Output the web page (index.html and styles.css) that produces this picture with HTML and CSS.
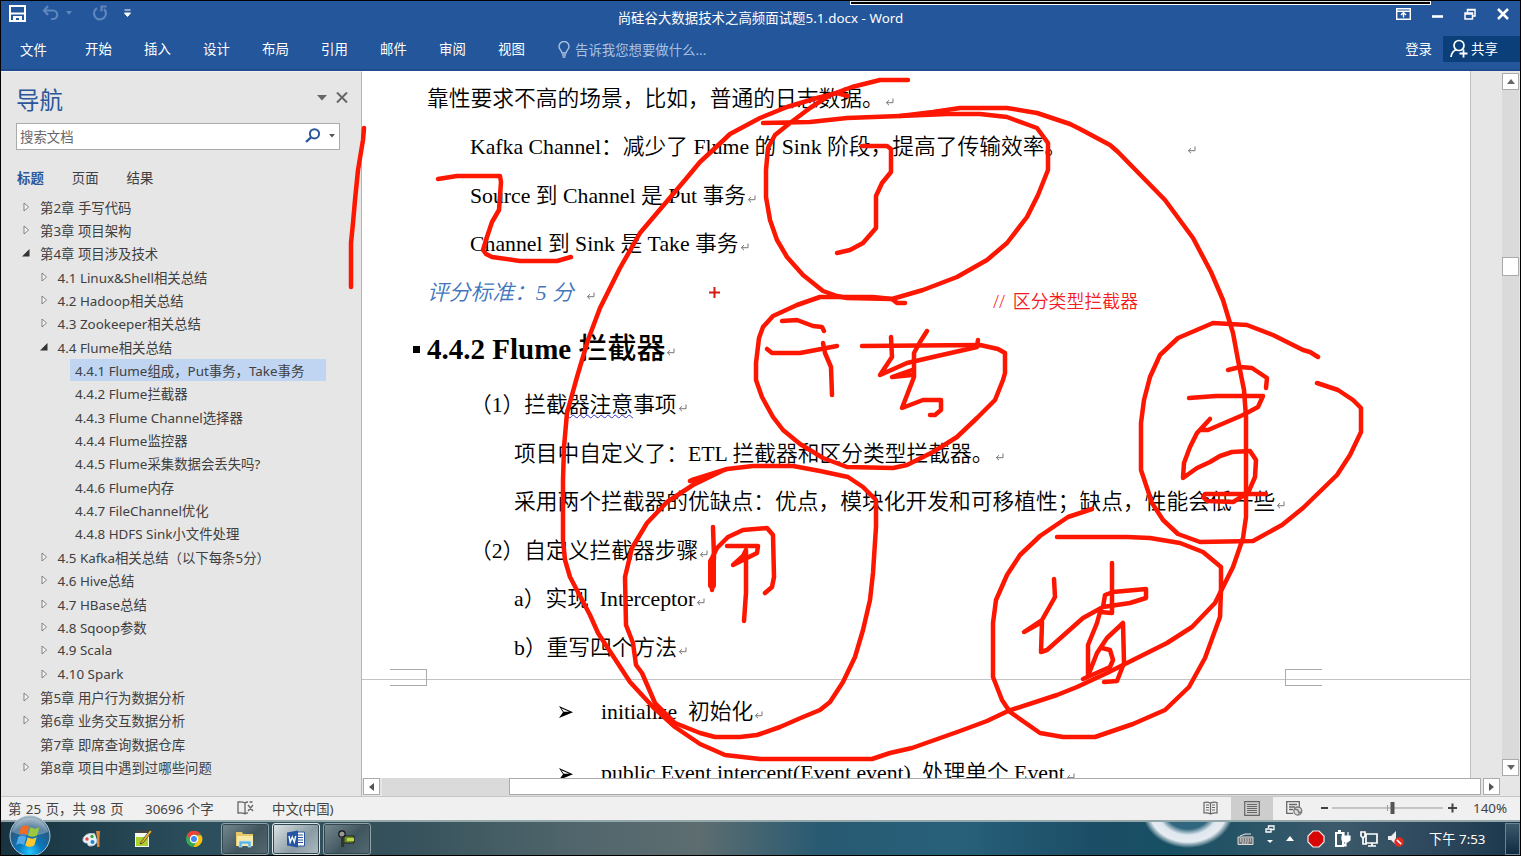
FILE: index.html
```html
<!DOCTYPE html>
<html lang="zh-CN">
<head>
<meta charset="utf-8">
<title>尚硅谷大数据技术之高频面试题5.1.docx - Word</title>
<link rel="stylesheet" href="styles.css">
</head>
<body>
<svg class="defs" width="0" height="0">
  <symbol id="ret" viewBox="0 0 9 9"><path d="M8 .5v4.2H1.6M4 2.2 1.4 4.7 4 7.2" fill="none" stroke="#777" stroke-width="1"/></symbol>
  <symbol id="shut" viewBox="0 0 7 10"><path d="M1 1v8l4.6-4z" fill="#f4f4f4" stroke="#777" stroke-width=".9"/></symbol>
  <symbol id="open" viewBox="0 0 8 8"><path d="M7.5 0v7.5H0z" fill="#333"/></symbol>
  <symbol id="bullet" viewBox="0 0 16 14"><path d="M1 1l14 6.2L1 13l4-5.800z" fill="#000"/><path d="M3.300 3.200l8 3.600H5.800z" fill="#fff"/></symbol>
</svg>
<div class="screen">
  <header class="head">
    <div class="titlebar">
      <div class="quick">
        <svg class="save" width="17" height="17" viewBox="0 0 17 17"><path d="M1 1h15v15H1z" fill="none" stroke="#fff" stroke-width="2"/><path d="M2 8.500h13" stroke="#fff" stroke-width="2" fill="none"/><path d="M4 11h9v5h-3v-3H7v3H4z" fill="#fff"/></svg>
        <svg class="undo" width="18" height="16" viewBox="0 0 18 16"><path d="M6 1 2 5.500 6 10M2.500 5.500h8.500a4 4 0 0 1 0 8.500H9" fill="none" stroke="#5f86bc" stroke-width="2.200"/></svg>
        <svg class="caret" width="6" height="4" viewBox="0 0 6 4"><path d="M0 0h6L3 4z" fill="#5f86bc"/></svg>
        <svg class="redo" width="16" height="16" viewBox="0 0 16 16"><path d="M5 3.200a6 6 0 1 0 7 .8M9.500 6.500V1.500h5" fill="none" stroke="#5f86bc" stroke-width="2.200"/></svg>
        <svg class="more" width="7" height="8" viewBox="0 0 7 8"><path d="M.5 1h6M.5 4h6L3.500 7.500z" fill="#fff" stroke="#fff" stroke-width="1"/></svg>
      </div>
      <div class="doctitle">尚硅谷大数据技术之高频面试题5.1.docx - Word</div>
      <div class="winbtns">
        <svg width="15" height="12" viewBox="0 0 15 12"><path d="M.7.7h13.600v10.600H.7zM1 3.200h13" fill="none" stroke="#fff" stroke-width="1.400"/><path d="M7.500 9.500V5.500M5 7l2.500-2.500L10 7" fill="none" stroke="#fff" stroke-width="1.400"/></svg>
        <svg width="11" height="12" viewBox="0 0 11 12"><path d="M0 8.500h11" stroke="#fff" stroke-width="2.600"/></svg>
        <svg width="12" height="12" viewBox="0 0 12 12"><path d="M1 5h7.500v6H1zM1 6h7M3.500 5V1.500H11V8H8.500M3.500 2H11" fill="none" stroke="#fff" stroke-width="1.500"/></svg>
        <svg width="12" height="12" viewBox="0 0 12 12"><path d="M1 1l10 10M11 1 1 11" stroke="#fff" stroke-width="2.500"/></svg>
      </div>
    </div>
    <nav class="tabs">
      <span class="tab">文件</span><span class="tab">开始</span><span class="tab">插入</span><span class="tab">设计</span><span class="tab">布局</span><span class="tab">引用</span><span class="tab">邮件</span><span class="tab">审阅</span><span class="tab">视图</span>
      <svg class="bulb" width="12" height="17" viewBox="0 0 12 17"><path d="M4 12C4 9.500 1 8.500 1 5.500a5 5 0 0 1 10 0C11 8.500 8 9.500 8 12zM4 14h4M4.500 16h3" fill="none" stroke="#a9c0e0" stroke-width="1.400"/></svg>
      <span class="tell">告诉我您想要做什么...</span>
      <span class="login">登录</span>
      <span class="share"><svg width="18" height="19" viewBox="0 0 18 19"><circle cx="9" cy="6.500" r="5" fill="none" stroke="#fff" stroke-width="1.700"/><path d="M1 18c.5-4 2.500-6.500 5.500-7.500M13.500 10.500v8M9.500 14.500h8" fill="none" stroke="#fff" stroke-width="1.800"/></svg>共享</span>
    </nav>
    <div class="capbar"></div>
  </header>

  <main class="work">
    <aside class="side">
      <div class="sidehead"><span class="navtitle">导航</span>
        <svg width="10" height="6" viewBox="0 0 10 6"><path d="M0 0h10L5 5.500z" fill="#666"/></svg>
        <svg width="12" height="11" viewBox="0 0 12 11"><path d="M1 .5l10 10M11 .5l-10 10" stroke="#666" stroke-width="2"/></svg>
      </div>
      <div class="search"><span>搜索文档</span>
        <svg width="16" height="15" viewBox="0 0 16 15"><circle cx="9.500" cy="5.800" r="4.600" fill="none" stroke="#2b579a" stroke-width="2"/><path d="M6 9.300 1 14" stroke="#2b579a" stroke-width="2.400"/></svg>
        <svg width="6" height="4" viewBox="0 0 6 4"><path d="M0 0h6L3 3.500z" fill="#555"/></svg>
      </div>
      <div class="sidetabs"><b>标题</b><span>页面</span><span>结果</span></div>
      <div class="tree">
        <div class="row l1"><svg class="tri"><use href="#shut"/></svg><span>第2章 手写代码</span></div>
        <div class="row l1"><svg class="tri"><use href="#shut"/></svg><span>第3章 项目架构</span></div>
        <div class="row l1"><svg class="tri o"><use href="#open"/></svg><span>第4章 项目涉及技术</span></div>
        <div class="row l2"><svg class="tri"><use href="#shut"/></svg><span>4.1 Linux&amp;Shell相关总结</span></div>
        <div class="row l2"><svg class="tri"><use href="#shut"/></svg><span>4.2 Hadoop相关总结</span></div>
        <div class="row l2"><svg class="tri"><use href="#shut"/></svg><span>4.3 Zookeeper相关总结</span></div>
        <div class="row l2"><svg class="tri o"><use href="#open"/></svg><span>4.4 Flume相关总结</span></div>
        <div class="row l3 sel"><span>4.4.1 Flume组成，Put事务，Take事务</span></div>
        <div class="row l3"><span>4.4.2 Flume拦截器</span></div>
        <div class="row l3"><span>4.4.3 Flume Channel选择器</span></div>
        <div class="row l3"><span>4.4.4 Flume监控器</span></div>
        <div class="row l3"><span>4.4.5 Flume采集数据会丢失吗?</span></div>
        <div class="row l3"><span>4.4.6 Flume内存</span></div>
        <div class="row l3"><span>4.4.7 FileChannel优化</span></div>
        <div class="row l3"><span>4.4.8 HDFS Sink小文件处理</span></div>
        <div class="row l2"><svg class="tri"><use href="#shut"/></svg><span>4.5 Kafka相关总结（以下每条5分）</span></div>
        <div class="row l2"><svg class="tri"><use href="#shut"/></svg><span>4.6 Hive总结</span></div>
        <div class="row l2"><svg class="tri"><use href="#shut"/></svg><span>4.7 HBase总结</span></div>
        <div class="row l2"><svg class="tri"><use href="#shut"/></svg><span>4.8 Sqoop参数</span></div>
        <div class="row l2"><svg class="tri"><use href="#shut"/></svg><span>4.9 Scala</span></div>
        <div class="row l2"><svg class="tri"><use href="#shut"/></svg><span>4.10 Spark</span></div>
        <div class="row l1"><svg class="tri"><use href="#shut"/></svg><span>第5章 用户行为数据分析</span></div>
        <div class="row l1"><svg class="tri"><use href="#shut"/></svg><span>第6章 业务交互数据分析</span></div>
        <div class="row l1"><svg class="tri"></svg><span>第7章 即席查询数据仓库</span></div>
        <div class="row l1"><svg class="tri"><use href="#shut"/></svg><span>第8章 项目中遇到过哪些问题</span></div>
      </div>
    </aside>

    <section class="pane">
      <div class="canvas">
        <article class="page">
          <div class="line in0">靠性要求不高的场景，比如，普通的日志数据。<svg class="ret"><use href="#ret"/></svg></div>
          <div class="line in1">Kafka Channel：减少了 Flume 的 Sink 阶段，提高了传输效率。<svg class="ret farther"><use href="#ret"/></svg></div>
          <div class="line in1">Source 到 Channel 是 Put 事务<svg class="ret"><use href="#ret"/></svg></div>
          <div class="line in1">Channel 到 Sink 是 Take 事务<svg class="ret"><use href="#ret"/></svg></div>
          <div class="line in0 score"><i>评分标准：5 分</i><svg class="ret far"><use href="#ret"/></svg></div>
          <h3 class="line title"><span class="sq"></span>4.4.2 Flume <span class="cjk">拦截器</span><svg class="ret"><use href="#ret"/></svg></h3>
          <div class="line in1">（1）拦截<span class="wavy">器注意</span>事项<svg class="ret"><use href="#ret"/></svg></div>
          <div class="line in2">项目中自定义了：ETL 拦截器和区分类型拦截器。<svg class="ret"><use href="#ret"/></svg></div>
          <div class="line in2">采用两个拦截器的优缺点：优点，模块化开发和可移植性；缺点，性能会低一些<svg class="ret"><use href="#ret"/></svg></div>
          <div class="line in1">（2）自定义拦截器步骤<svg class="ret"><use href="#ret"/></svg></div>
          <div class="line in2">a）实现&nbsp; Interceptor<svg class="ret"><use href="#ret"/></svg></div>
          <div class="line in2">b）重写四个方法<svg class="ret"><use href="#ret"/></svg></div>
          <div class="pagebreak"><span class="corner l"></span><span class="corner r"></span></div>
          <div class="line in3"><svg class="bul"><use href="#bullet"/></svg>initialize&nbsp; 初始化<svg class="ret"><use href="#ret"/></svg></div>
          <div class="line in3 last"><svg class="bul"><use href="#bullet"/></svg>public Event intercept(Event event)&nbsp; 处理单个 Event<svg class="ret"><use href="#ret"/></svg></div>
        </article>
        <div class="vscroll">
          <span class="sbtn"><svg width="8" height="5"><path d="M0 5h8L4 0z" fill="#666"/></svg></span>
          <span class="vthumb"></span>
          <span class="sbtn"><svg width="8" height="5"><path d="M0 0h8L4 5z" fill="#666"/></svg></span>
        </div>
      </div>
      <div class="hscroll">
        <span class="sbtn"><svg width="5" height="8"><path d="M5 0v8L0 4z" fill="#555"/></svg></span>
        <span class="htrack"><span class="hthumb"></span></span>
        <span class="sbtn"><svg width="5" height="8"><path d="M0 0v8l5-4z" fill="#555"/></svg></span>
      </div>
    </section>
  </main>

  <footer class="status">
    <span class="s1">第 25 页，共 98 页</span><span class="s2">30696 个字</span>
    <svg class="proof" width="17" height="14" viewBox="0 0 17 14"><path d="M8 12.500V2C6 .8 3 .8 1 1v11c3-.3 5-.2 7 .8 1-.5 1.500-.8 3-1M8 2c1-.8 1.800-1 3-1M11 4l5 6M16 4l-5 6M12.500 1h3" fill="none" stroke="#666" stroke-width="1.300"/></svg>
    <span>中文(中国)</span>
    <span class="views">
      <span class="vb"><svg width="15" height="15" viewBox="0 0 15 15"><path d="M7.500 13.500V2C5 1 3 1 1 1.500v10.500c2-.4 4-.4 6.500 1 2.500-1.400 4.500-1.400 6.500-1V1.500C12 1 10 1 7.500 2M3 4h3M3 6.500h3M3 9h3M9 4h3M9 6.500h3M9 9h3" fill="none" stroke="#666" stroke-width="1.200"/></svg></span>
      <span class="vb on"><svg width="16" height="15" viewBox="0 0 16 15"><path d="M.7.7h14.600v13.600H.7zM3 3.500h10M3 5.500h10M3 7.500h10M3 9.500h10M3 11.500h10" fill="none" stroke="#666" stroke-width="1.200"/></svg></span>
      <span class="vb"><svg width="17" height="15" viewBox="0 0 17 15"><path d="M7 12.300H.7V.7h12.600v5M3 3.500h8M3 6h6M3 8.500h4" fill="none" stroke="#666" stroke-width="1.300"/><circle cx="11.800" cy="10" r="4" fill="#ddd" stroke="#777" stroke-width="1.300"/><path d="M9 8l3 1 1 3 2-1" fill="none" stroke="#777" stroke-width="1.500"/></svg></span>
    </span>
    <svg class="zoom" width="138" height="16" viewBox="0 0 138 16"><path d="M1 8h7M128 8h9M132.500 3.500v9" stroke="#444" stroke-width="2"/><path d="M12 8h111" stroke="#999"/><path d="M67.500 5v6" stroke="#999"/><path d="M70.500 2h4v12h-4z" fill="#555"/></svg>
    <span class="pct">140%</span>
  </footer>

  <div class="taskbar">
    <svg class="orb" viewBox="0 0 42 42">
      <defs><radialGradient id="og" cx=".5" cy=".9" r=".85"><stop offset="0" stop-color="#25c8ff"/><stop offset=".35" stop-color="#0878bd"/><stop offset=".75" stop-color="#285a83"/><stop offset="1" stop-color="#91a9b9"/></radialGradient></defs>
      <circle cx="21" cy="21" r="20" fill="url(#og)" stroke="#a9c3d3" stroke-width="1"/><path d="M3 17a18.500 18.500 0 0 1 36 0c-12 5-24 5-36 0z" fill="#fff" opacity=".27"/>
      <path d="M12 12c3-2 5-2 8-.3l-2.300 8.300c-3-1.800-5-1.600-8 .2z" fill="#f06b26"/><path d="M21.500 12.300c3 1.900 6 1.800 9-.1L28 20.500c-3 1.800-6 1.800-9 0z" fill="#9aca3c"/><path d="M9.300 22c3-1.900 5-1.900 8-.1L15 30c-3-1.700-5-1.600-8 .2z" fill="#55a9e6"/><path d="M18.700 22.300c3 1.800 6 1.800 9 0l-2.500 8.200c-3 1.900-6 1.800-9 0z" fill="#fdc82f"/>
    </svg>
    <svg class="app" width="52" height="32" viewBox="0 0 52 32"><path d="M29 11c-7-2-12 2-12 6 0 3 3 3 4 3s0 3 3 3c5 0 7-3 7-6" fill="#e8f1f8" stroke="#b7cbd9"/><circle cx="21" cy="16" r="1.700" fill="#e44"/><circle cx="26" cy="13.500" r="1.700" fill="#3a3"/><circle cx="26.500" cy="19" r="2" fill="#28c"/><path d="M30 8h4l-.5 7v9h-2.500v-9z" fill="#d9873d"/></svg>
    <svg class="app" width="52" height="32" viewBox="0 0 52 32"><path d="M17 9h14v15H17z" fill="#f5f8ee"/><path d="M17 7.500h14V10H17z" fill="#444"/><path d="M18 14h12v9H18z" fill="#acd02c"/><path d="M23 19 32 7l2 1.500-9 11.500-3 1z" fill="#f1b52a" stroke="#333" stroke-width=".7"/></svg>
    <svg class="app" width="52" height="32" viewBox="0 0 52 32"><circle cx="25" cy="16" r="8" fill="#34a853"/><path d="M18 12a8 8 0 0 1 14-.2H25l-3 6z" fill="#ea4335"/><path d="M32.500 12.500a8 8 0 0 1-8 11.500l4-7-3-4.500z" fill="#fbc116"/><circle cx="25" cy="16" r="3.600" fill="#4285f4" stroke="#fff" stroke-width="1.300"/></svg>
    <span class="task"><svg width="20" height="18" viewBox="0 0 20 18"><path d="M1 2h6l1 2h10v12H1z" fill="#e7c866"/><path d="M2 6h16v10H2z" fill="#f8e9a4"/><path d="M4 17v-6h12v6h-3v-3H7v3z" fill="#5cb3e4" stroke="#cde9f7" stroke-width=".7"/></svg></span>
    <span class="task active"><svg width="20" height="18" viewBox="0 0 20 18"><path d="M10 2h8.500v14H10z" fill="#fff" stroke="#2b579a"/><path d="M12 5h5M12 7.500h5M12 10h5M12 12.500h5" stroke="#2b579a"/><path d="M1 2.500 12 .5v17L1 15.500z" fill="#2456a4"/><path d="M3 6l1.200 6L6.300 7l2 5L9.700 6" fill="none" stroke="#fff" stroke-width="1.400"/></svg></span>
    <span class="task"><svg width="20" height="18" viewBox="0 0 20 18"><path d="M7 6h10v7H7z" fill="#6d8f28" stroke="#222"/><path d="M10 8h7v3h-7z" fill="#b7d545"/><circle cx="5" cy="4" r="3.200" fill="#999" stroke="#111" stroke-width="1.200"/><path d="M4 7h3v10H4z" fill="#333"/></svg></span>
    <div class="tray">
      <svg width="17" height="14" viewBox="0 0 17 14"><path d="M1 5h15v7.500H1zM3 4l5-2h6" fill="#777" stroke="#ddd"/><path d="M3 7h11M3 9h11M5 11h7" stroke="#eee" stroke-dasharray="1.500 1"/></svg>
      <svg class="ime" width="10" height="20" viewBox="0 0 10 20"><path d="M1 4h5v3H1zM3.500 3V1H9v3.500H6" fill="none" stroke="#fff" stroke-width="1.300"/><path d="M2 15h6l-3 3z" fill="#fff"/></svg>
      <svg class="up" width="8" height="5" viewBox="0 0 8 5"><path d="M0 5h8L4 0z" fill="#fff"/></svg>
      <svg width="18" height="18" viewBox="0 0 18 18"><path d="M6 1h6l5 5v6l-5 5H6l-5-5V6z" fill="#d70705" stroke="#eee" stroke-width="1.200"/></svg>
      <svg width="17" height="18" viewBox="0 0 17 18"><path d="M2 3h7v13H2zM4 1h3" fill="none" stroke="#fff" stroke-width="2"/><path d="M8 6h8v4l-2.500 2h-3L8 10zM10 6V2M14 6V2M12 12v4H8" fill="#fff" stroke="#fff" stroke-width="1.200"/></svg>
      <svg width="18" height="18" viewBox="0 0 18 18"><path d="M6 4h11v9H6zM8 16h8M12 13v3M3 8v6h4M1 2v4l2 2 2-2V2z" fill="none" stroke="#fff" stroke-width="1.700"/></svg>
      <svg width="17" height="17" viewBox="0 0 17 17"><path d="M1 6h3l5-5v14l-5-5H1z" fill="#eee"/><circle cx="12" cy="12" r="4.500" fill="#e32b22"/><path d="M9.500 9.500l5 5" stroke="#fff" stroke-width="1.700"/><circle cx="12" cy="12" r="3.800" fill="none" stroke="#e32b22" stroke-width="1.500"/></svg>
    </div>
    <span class="clock">下午 7:53</span>
    <span class="peek"></span>
  </div>

  <div class="note">// 区分类型拦截器</div>
  <svg class="ink" width="1521" height="856" viewBox="0 0 1521 856">
    <!-- side bar stroke and figure 2 -->
    <polyline points="364,128 363,140 358,170 355,200 353,223 351,243 351,287"/>
    <polyline points="438,179 457,176 500,176 501,182 499,210 492,222 487,237 483,250 486,254 492,257 520,261 557,261 571,257"/>
    <!-- outer loop -->
    <polyline points="848,96 837,93 817,98 787,107 760,118 730,134 713,150 700,162 685,180 640,233 620,268 600,308 588,340 577,377 567,413 564,447 563,480 563,540 565,560 570,577 590,615 598,633 630,682 653,707 675,727 700,744 725,755 760,759 872,759 890,753 912,748 960,731 987,721 1008,711 1057,695 1077,687 1107,673 1127,663 1167,643 1192,627 1215,603 1233,567 1243,538 1246,517 1246,417 1244,390 1238,360 1233,333 1223,300 1211,272 1193,238 1165,200 1118,152 1110,145 1080,129 1070,124 1037,113 1007,108 960,108 933,112 900,116"/>
    <!-- upper loop and its figure -->
    <polyline points="908,80 880,80 852,87 830,95 810,108 790,123 775,135 768,148 766,170 766,197 770,220 777,240 787,257 803,275 823,291 837,296 847,298 892,299 923,290 957,277 987,260 1007,243 1027,217 1038,195 1048,170 1048,143 1037,128 1007,117 980,114 947,114 900,116 847,118 810,122 763,123"/>
    <polyline points="862,146 887,146 891,149 891,172 882,183 876,196 876,228 863,243 850,250 837,253"/>
    <!-- middle loop -->
    <polyline points="905,303 897,303 892,299 873,297 820,297 797,305 773,316 763,327 759,338 756,363 756,380 762,397 773,417 783,430 800,444 823,458 847,467 893,468 907,465 933,452 957,437 977,418 995,400 1003,380 1005,373 1005,353 998,349 980,345 862,346"/>
    <polyline points="978,340 977,347 933,357 907,363 880,375 892,357 891,337"/>
    <polyline points="927,331 920,342 914,353 914,377 902,408 923,400 941,400 941,410 935,415 930,415"/>
    <polyline points="912,370 892,377 912,375"/>
    <polyline points="782,321 797,320 813,326 822,327 824,331"/>
    <polyline points="767,349 772,353 800,353 837,346"/>
    <polyline points="823,343 825,353 831,367 832,395"/>
    <!-- lower left loop -->
    <polyline points="690,481 727,469 753,466 793,466 820,471 848,477 863,487 876,500 876,527 873,573 870,600 863,630 855,657 843,682 830,702 820,710 803,717 780,727 757,735 740,737 715,737 700,733 675,723 655,703 642,673 636,665 633,643 626,625 625,577 632,548 647,523 667,502 693,485 724,470 692,480"/>
    <polyline points="713,527 714,557 712,590"/>
    <polyline class="thick" points="712,562 712,585"/>
    <polyline points="711,560 717,548 728,537 743,530 767,528 773,535 774,577 772,587 765,593"/>
    <polyline points="727,546 758,546 757,553 733,565 743,556 746,550 746,593 744,621"/>
    <!-- right loop -->
    <polyline points="1318,357 1310,352 1303,350 1273,335 1247,325 1213,323 1178,338 1160,355 1150,377 1144,400 1141,423 1141,470 1152,503 1163,520 1178,534 1200,542 1253,541 1282,525 1303,508 1337,475 1350,455 1361,432 1361,408 1353,400 1338,390 1317,383"/>
    <polyline points="1228,370 1240,367 1252,368 1267,378 1266,388"/>
    <polyline points="1189,398 1216,396 1263,396 1258,407 1243,415 1208,430 1200,430 1210,419 1197,433 1190,447 1184,463 1183,478 1197,468 1210,462 1220,456 1232,452 1250,451 1256,460 1255,477 1248,493 1233,502 1207,501 1203,497 1205,494 1266,494"/>
    <!-- lower right loop -->
    <polyline points="1092,509 1068,517 1040,536 1020,555 1007,575 996,600 993,623 993,677 1002,700 1010,712 1040,733 1063,737 1095,737 1133,724 1165,710 1189,687 1205,658 1220,617 1221,590 1221,567 1203,552 1180,543 1150,538 1127,537 1057,537"/>
    <polyline points="1054,579 1055,597 1042,620 1024,632 1042,622 1041,652 1047,650 1083,618 1103,607 1105,595 1113,592 1146,589 1146,598 1130,603 1103,607"/>
    <polyline points="1112,563 1112,613 1100,612 1097,623 1088,645 1088,676 1097,653 1107,638 1123,623 1124,663 1117,681 1104,682"/>
    <polyline points="1102,648 1110,650 1113,660 1110,667 1083,679"/>
    <path class="cross" d="M709 292.500h11M714.500 287v11"/>
  </svg>
</div>
</body>
</html>
```
FILE: styles.css
```css
* { box-sizing: border-box; }
body { margin: 0; overflow: hidden; font-family: "Noto Sans", "Noto Sans CJK SC", sans-serif; }
svg { display: block; flex: none; }
.defs { position: absolute; }
.screen { position: relative; width: 1521px; height: 856px; border: 1px solid #000; display: flex; flex-direction: column; background: #e6e6e6; overflow: hidden; }

.head { height: 70px; flex: none; background: #23569a; border-bottom: 2px solid #1f4d8c; color: #fff; font-size: 13.4px; }
.titlebar { height: 32px; display: flex; align-items: center; justify-content: space-between; }
.quick { width: 560px; display: flex; align-items: center; padding: 0 0 8px 8px; }
.undo { margin-left: 16px; }
.caret { margin-left: 6px; }
.redo { margin-left: 20px; }
.more { margin-left: 16px; }
.doctitle { font-size: 13.4px; letter-spacing: .03px; white-space: nowrap; }
.winbtns { width: 560px; display: flex; justify-content: flex-end; align-items: center; gap: 21px; padding: 0 11px 7px 0; }
.tabs { display: flex; align-items: center; height: 32px; padding-left: 19px; white-space: nowrap; }
.tab { width: 59px; padding-bottom: 3px; }
.tab:first-child { width: 65px; padding-bottom: 1px; }
.bulb { margin-left: 1px; }
.tell { margin-left: 5px; padding-bottom: 1px; color: #a9c0e0; }
.login { margin-left: auto; padding-bottom: 3px; }
.share { display: flex; align-items: center; gap: 3px; width: 77px; height: 26px; margin-left: 11px; padding: 0 0 2px 7px; background: #0a3f7a; }
.capbar { position: absolute; left: 849px; top: 0; width: 581px; height: 4px; background: #000; border: solid #fff; border-width: 0 1px 1px; box-shadow: inset 0 1px #ddd; }

.work { flex: 1; display: flex; min-height: 0; }
.side { width: 361px; border-right: 1px solid #b5b5b5; background: #e6e6e6; border-top: 1px solid #f0f0f0; color: #404040; }
.sidehead { height: 52px; display: flex; align-items: center; padding: 8px 13px 0 15px; gap: 9px; }
.sidehead svg { margin-top: -9px; }
.navtitle { flex: 1; font-size: 23.500px; line-height: 30px; margin-top: -5px; color: #2b579a; }
.search { margin: -1px 0 0 15px; width: 324px; height: 27px; border: 1px solid #ababab; background: #fff; display: flex; align-items: center; gap: 8px; padding: 0 4px 2px 3px; font-size: 13.400px; color: #666; }
.search span { flex: 1; }
.sidetabs { display: flex; gap: 28px; padding: 17px 0 0 16px; height: 44px; line-height: 22px; font-size: 13.400px; }
.sidetabs b { color: #2b579a; }
.tree { padding-top: 1px; font-size: 13.400px; }
.row { height: 23.350px; display: flex; align-items: center; white-space: nowrap; }
.tri { width: 7px; height: 10px; margin-right: 10px; }
.tri.o { width: 8px; height: 8px; margin: 0 10px 0 -1px; }
.l1 { padding-left: 22px; }
.l2 { padding-left: 39.500px; }
.l3 { margin-left: 69px; padding-left: 5px; }
.sel { width: 256px; height: 22px; margin-top: .6px; margin-bottom: .750px; background: #c0d5f2; }

.pane { flex: 1; display: flex; flex-direction: column; min-width: 0; }
.canvas { flex: 1; display: flex; min-height: 0; }
.page { width: 1109px; margin-right: 31px; background: #fff; border-right: 1px solid #c0c0c0; overflow: hidden; color: #000; font: 350 21.750px "Liberation Serif", "Noto Sans CJK SC", serif; padding-top: 3.500px; }
.line { height: 48.500px; line-height: 48.500px; display: flex; align-items: center; white-space: pre; }
.in0 { padding-left: 65px; }
.in1 { padding-left: 108px; }
.in2 { padding-left: 152px; }
.in3 { padding-left: 196px; height: 61px; }
.last { height: 62px; }
.ret { width: 9px; height: 9px; margin: 7px 0 0 1px; }
.far { margin-left: 12px; }
.farther { margin-left: 121px; }
.score { color: #4176bd; }
.title { margin: 0; height: 64px; padding-left: 51px; font-size: 29px; font-weight: bold; }
.cjk { font-weight: 500; }
.sq { width: 7px; height: 7px; background: #000; margin-right: 7px; }
.wavy { text-decoration: underline wavy #3333cc 1px; text-underline-offset: 2px; }
.pagebreak { height: 17px; margin-top: -3.500px; margin-bottom: -4px; display: flex; justify-content: space-between; padding: 0 148px 0 28px; background: linear-gradient(#c3c3c3, #c3c3c3) 0 10px / 100% 1px no-repeat; }
.corner { width: 37px; height: 17px; border: 1px solid #aaa; }
.corner.l { border-left: 0; }
.corner.r { border-right: 0; }
.bul { width: 16px; height: 14px; margin-right: 27px; }
.vscroll { width: 17px; background: #dadada; display: flex; flex-direction: column; margin: 2px 0; }
.sbtn { width: 17px; height: 17px; flex: none; border: 1px solid #ababab; background: #fff; display: flex; align-items: center; justify-content: center; }
.vthumb { height: 19px; margin: 167px 0 auto; border: 1px solid #ababab; background: #fff; }
.hscroll { height: 18px; display: flex; gap: 2px; padding-left: 1px; }
.htrack { width: 1099px; background: #dadada; padding-left: 127px; }
.hthumb { display: block; height: 17px; border: 1px solid #ababab; background: #fff; }

.status { height: 24px; flex: none; display: flex; align-items: center; background: #f0f0f0; border-top: 1px solid #c6c6c6; padding: 0 0 1px 7px; font-size: 13.400px; color: #444; white-space: nowrap; }
.s1 { width: 137px; word-spacing: 1px; }
.s2 { width: 92px; }
.proof { margin-right: 18px; }
.views { display: flex; margin-left: auto; height: 23px; }
.vb { width: 42px; display: flex; align-items: center; justify-content: center; }
.on { background: #cdcdcd; }
.zoom { margin-left: 5px; }
.pct { width: 47px; margin-left: 15px; }

.taskbar { height: 35px; flex: none; display: flex; align-items: center; border-top: 2px solid #93a6aa; color: #fff; background: radial-gradient(ellipse 46px 38px at 1187px -12px, #31677e 50%, #dfe7ee 66%, #e6ecf1 84%, transparent 100%), linear-gradient(90deg, #17333f 0, #2c4f5d 13%, #35515b 26%, #51666c 38%, #5d6d70 46%, #285a72 54%, #28607a 63%, #1c4d66 72%, #185063 77%, #3c596b 88%, #294358 96%, #18374c 100%); }
.orb { width: 42px; height: 42px; margin: -5px 15px 0 8px; position: relative; }
.app { margin-right: -.5px; }
.task { width: 48px; height: 32px; margin-right: 3px; display: flex; align-items: center; justify-content: center; border: 1px solid #8fa1a9; border-radius: 3px; background: linear-gradient(135deg, #778991, #40565f 55%, #536871); box-shadow: inset 0 0 0 1px #334750; }
.app + .task { margin-left: 0; }
.active { background: linear-gradient(135deg, #dfe6e9, #8a9ba3 60%, #aebbc1); border-color: #dfe7ea; }
.tray { margin-left: auto; display: flex; align-items: center; gap: 9px; }
.ime { margin: -8px 2px 0 2px; }
.up { margin-right: 4px; }
.clock { width: 62px; font-size: 13.300px; margin-left: 25px; white-space: nowrap; }
.peek { width: 15px; height: 32px; margin-left: 14px; border: 1px solid #6c8594; background: linear-gradient(#3c586b, #102b40); }

.note { position: absolute; left: 992px; top: 287px; font: 350 17.900px/26px "Open Sans", "Noto Sans CJK SC", sans-serif; word-spacing: 3px; color: #f51a20; white-space: nowrap; }
.ink { position: absolute; left: -1px; top: -1px; fill: none; stroke: #fd1600; stroke-width: 4.500; stroke-linecap: round; stroke-linejoin: round; }
.thick { stroke-width: 8; }
.cross { stroke: #d51a10; stroke-width: 2; stroke-linecap: butt; }
```
